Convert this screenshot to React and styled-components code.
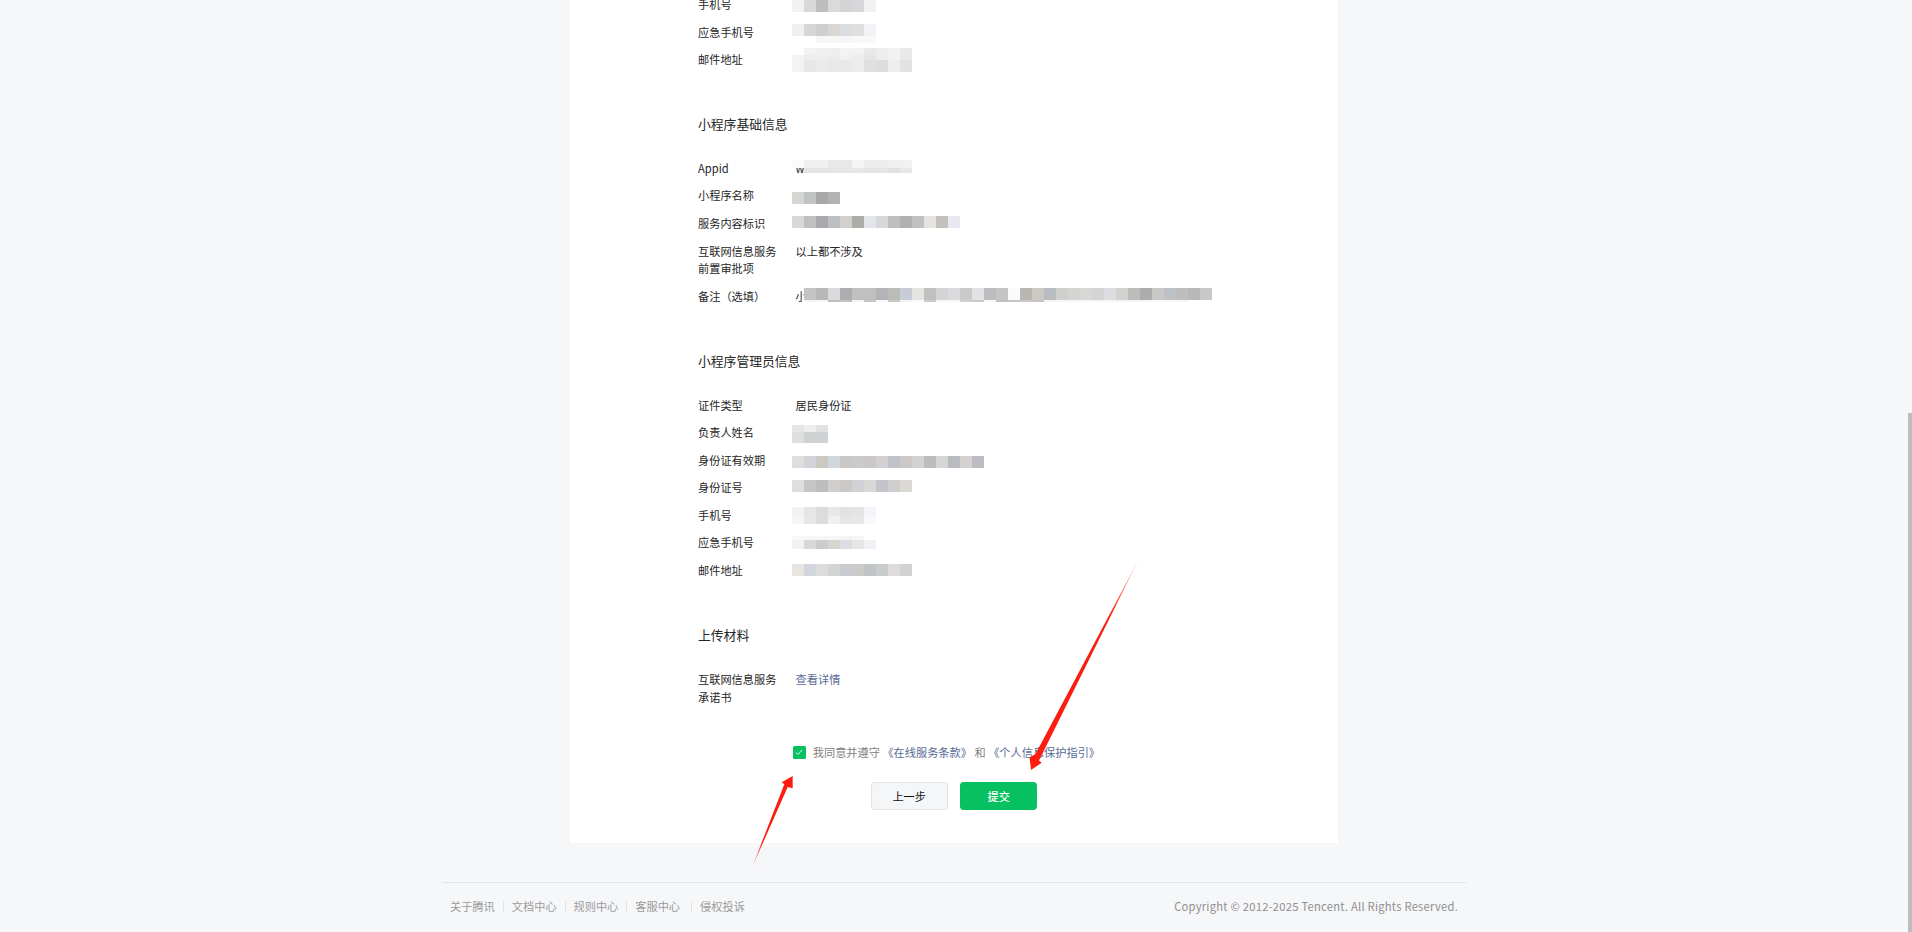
import React from "react";
import styled, { createGlobalStyle } from "styled-components";

const GlobalStyle = createGlobalStyle`
  html, body {
    margin: 0;
    padding: 0;
    height: 100%;
    overflow: hidden;
    background: #f6f7f9;
    font-family: "Noto Sans CJK SC", "Liberation Sans", sans-serif;
  }
`;

const Shell = styled.div`
  display: flex;
  height: 100vh;
  overflow: hidden;
  position: relative;
`;
const Main = styled.div`
  flex: 1;
  min-width: 0;
`;
const ScrollTrack = styled.div`
  width: 4px;
  display: flex;
  flex-direction: column;
`;
const ScrollThumb = styled.div`
  margin-top: 413px;
  flex: 1;
  background: #bdbdbd;
`;
const Card = styled.div`
  width: 768px;
  box-sizing: border-box;
  margin: -4px auto 0;
  padding: 0 128px 33px;
  background: #fff;
`;
const Section = styled.div`
  margin-top: 44px;
`;
const Title = styled.div`
  font-size: 12.8px;
  line-height: 22px;
  color: #262626;
  margin-bottom: 25px;
`;
const Row = styled.div`
  display: flex;
  font-size: 11.2px;
  line-height: 17.92px;
  margin-bottom: 9.6px;
  color: #262626;
`;
const Label = styled.div`
  width: 85px;
  margin-right: 12.6px;
  flex: none;
`;
const Value = styled.div`
  position: relative;
  flex: 1;
  min-height: 17.92px;
`;
const MosaicSvg = styled.svg`
  position: absolute;
  display: block;
  top: ${(p) => p.$top}px;
  left: -3.6px;
`;
const TextLink = styled.a`
  color: #576b95;
  text-decoration: none;
`;
const Agree = styled.div`
  display: flex;
  align-items: center;
  justify-content: center;
  margin-top: 37px;
  padding-right: 15px;
  font-size: 11.2px;
  line-height: 17.92px;
  color: #7f7f7f;
  white-space: pre;
  text-spacing-trim: space-all;
`;
const CheckBox = styled.span`
  width: 12.8px;
  height: 12.8px;
  border-radius: 1.6px;
  background: #07c160;
  margin-right: 7px;
  display: flex;
  align-items: center;
  justify-content: center;
`;
const Buttons = styled.div`
  display: flex;
  justify-content: center;
  gap: 12.8px;
  margin-top: 20px;
`;
const Button = styled.button`
  width: 76.8px;
  height: 28.8px;
  box-sizing: border-box;
  padding: 0;
  border-radius: 3.2px;
  font-family: inherit;
  font-size: 11.2px;
  font-weight: ${(p) => (p.$primary ? 500 : 400)};
  color: ${(p) => (p.$primary ? "#fff" : "#111")};
  background: ${(p) => (p.$primary ? "#07c160" : "#f5f6f8")};
  border: 1px solid ${(p) => (p.$primary ? "#07c160" : "#e2e4e7")};
`;
const Footer = styled.div`
  width: 1024px;
  box-sizing: border-box;
  margin: 39px auto 0;
  padding: 14px 8px 0;
  border-top: 1px solid #e4e5e7;
  display: flex;
  justify-content: space-between;
  align-items: center;
  font-size: 11.2px;
  line-height: 18px;
  color: #9a9a9a;
`;
const FooterLinks = styled.div`
  display: flex;
  align-items: center;
`;
const FooterLink = styled.span`
  padding-right: ${(p) => (p.$extra ? 3 : 0)}px;
`;
const FooterSep = styled.i`
  width: 1px;
  height: 11px;
  margin: 0 8px;
  background: #e2e3e5;
`;
const Copyright = styled.div`
  color: #8f8f8f;
  letter-spacing: 0.25px;
`;
const ArrowSvg = styled.svg`
  position: absolute;
  left: 0;
  top: 0;
  pointer-events: none;
`;

// each row of a mosaic: [height, first column, ...cell colours]
const Mosaic = ({ top, rows }) => {
  let width = 0;
  let height = 0;
  rows.forEach(([h, col, ...cells]) => {
    width = Math.max(width, (col + cells.length) * 12);
    height += h;
  });
  let y = 0;
  return (
    <MosaicSvg $top={top} width={width} height={height} shapeRendering="crispEdges">
      {rows.map(([h, col, ...cells], i) => {
        const rowY = y;
        y += h;
        return cells.map((c, j) => (
          <rect key={`${i}-${j}`} x={(col + j) * 12} y={rowY} width="12" height={h} fill={c} />
        ));
      })}
    </MosaicSvg>
  );
};

const m = {
  phone1: [[12, 0, "#f2f2f2", "#d8d8d8", "#bebebe", "#dadada", "#d6d4d2", "#d6d7da", "#f0f2f1"]],
  backup1: [
    [12, 0, "#f0f0f0", "#d6d6d6", "#cfcfcf", "#d9d6d4", "#dcdde2", "#dfdfdf", "#f2f3f6"],
    [7, 2, "#f6f6f6", "#f6f6f6", "#f6f6f6", "#f8f8f8", "#f8f8f8"],
  ],
  mail1: [
    [7, 1, "#f1f2f3", "#f0f0f0", "#efefef", "#f2f3f3", "#f2f2f2", "#e9e9e9", "#edeeed", "#f2f2f2", "#e9e9e9"],
    [5, 0, "#f2f2f2", "#ecedef", "#eeeeee", "#ececec", "#eff0f0", "#ededed", "#e5e5e5", "#ecedec", "#f2f2f2", "#e8e8e8"],
    [12, 0, "#f3f3f2", "#e6e8e8", "#eaecec", "#e8e8e7", "#e6e8ea", "#ececec", "#e0e0e0", "#dddddd", "#eeeeee", "#e2e2e2"],
  ],
  appid: [
    [8, 0, "#fbfbfb", "#efefef", "#f0f0f0", "#e8e8e8", "#e8e8e8", "#f5f5f5", "#ececef", "#ececec", "#f0f0f0", "#f0f1f0"],
    [5, 1, "#e4e4e4", "#e4e4e4", "#e6e6e6", "#e6e6e6", "#e8e8e8", "#e4e4e4", "#e6e6e2", "#e0e0e0", "#e8e8e8"],
  ],
  name: [[12, 0, "#d6d5d2", "#c1c4c4", "#a8a8a8", "#b2b2b2"]],
  service: [[12, 0, "#d8d8d8", "#c2c0be", "#aaa9ae", "#bdc0c2", "#d2d0cc", "#acaca8", "#e2e5ea", "#d8d8d8", "#c0bebe", "#b0b2b0", "#c0c0c0", "#e3e3e1", "#c4c0bc", "#e8e8f0"]],
  note: [
    [12, 1, "#c4c4c4", "#b8b8b8", "#d8dade", "#aeaeae", "#c0c0be", "#c2c0be", "#b4b4b8", "#bcbcb6", "#c8ccd4", "#e4e4e0", "#c0c0c2", "#d4d4d2", "#dadade", "#cacac8", "#e0e2e6", "#bebcbc", "#c4c4c2", "#fafbfb", "#bab6b2", "#ccc8c4", "#b8bcc0", "#d0cfcc", "#d4d4d2", "#d8d8d6", "#d4d4d6", "#dcdde0", "#d4d2ce", "#bcbcbc", "#acacac", "#c8c8c6", "#bcc2c6", "#bebebe", "#b8b8b8", "#c8c8c8"],
    [2, 1, "#f4f4f4", "#f6f6f6", "#bdbdbd", "#c2c2c2", "#f4f4f4", "#c6c6c6", "#f8f8f8", "#c8c8c8", "#f4f4f4", "#f8f8f8", "#cccccc", "#f8f8f8", "#f6f6f6", "#cfcfcf", "#c8c8c8", "#fafafa", "#c0c0c0", "#c4c4c4", "#c8c8c8", "#c6c6c6", "#f4f4f4", "#f6f6f6", "#f6f6f6", "#f6f6f6", "#f4f4f4", "#f6f6f6", "#f4f4f4", "#f4f4f4", "#f6f6f6", "#f8f8f8", "#f6f6f6", "#f6f6f6"],
  ],
  holder: [
    [7, 0, "#e6e6e6", "#eeeeee", "#e2e2e2"],
    [11, 0, "#e0dede", "#cfd2d2", "#cfd2d4"],
  ],
  expiry: [[12, 0, "#e0dedc", "#d2d4da", "#ccc8c2", "#d0d8de", "#cac8c6", "#c8cacc", "#cac8c6", "#d2d0d2", "#bfc2c8", "#ccc8c8", "#d2d2d4", "#bcbcbc", "#d8d6d4", "#b8bcc0", "#d4d2d0", "#bebcc2"]],
  idno: [[12, 0, "#dfdedc", "#c4c6c8", "#bebebe", "#cfcfcf", "#cbc8c6", "#d0d2d6", "#dad8d6", "#c4c4cc", "#cecece", "#dcd8d4"]],
  phone2: [
    [9, 0, "#f2f2f2", "#e4e6e8", "#dcdcdc", "#e8e8e8", "#e2e2e4", "#e4e4e4", "#f4f5f8"],
    [8, 0, "#f6f5f4", "#e6e8e8", "#dcdcdc", "#f2f0ee", "#e4e6e8", "#e8e8e8", "#f8f9fb"],
  ],
  backup2: [
    [4, 0, "#f8f8f8", "#f6f6f6", "#f6f6f6", "#f6f6f6", "#f4f4f4", "#f6f6f6"],
    [9, 0, "#f2f2f2", "#d8d8d6", "#cccccc", "#d8d4d0", "#dcdde2", "#e6e6e6", "#f0f1f4"],
  ],
  mail2: [[12, 0, "#e8e4e0", "#d2d6dc", "#dcdcdc", "#d4d4d2", "#c8ccd0", "#cacac6", "#c0c4c4", "#c8cccc", "#dedcda", "#d2d2d2"]],
};

const Arrows = () => (
  <ArrowSvg width="1912" height="932">
    <defs>
      <linearGradient id="fadeA" gradientUnits="userSpaceOnUse" x1="1140" y1="557" x2="1110" y2="615">
        <stop offset="0" stopColor="#fd1c10" stopOpacity="0.1" />
        <stop offset="1" stopColor="#fd1c10" />
      </linearGradient>
      <linearGradient id="fadeB" gradientUnits="userSpaceOnUse" x1="751" y1="870" x2="762" y2="843">
        <stop offset="0" stopColor="#fd1c10" stopOpacity="0.1" />
        <stop offset="1" stopColor="#fd1c10" />
      </linearGradient>
    </defs>
    <polygon fill="url(#fadeA)" points="1140,557 1039,760.5 1041.7,762.7 1031,770 1029.5,757.5 1035.5,754" />
    <polygon fill="url(#fadeB)" points="751,870 784.3,784.3 781.7,782.3 792.7,776 792.7,788.3 787.7,787" />
  </ArrowSvg>
);

export default function App() {
  return (
    <>
      <GlobalStyle />
      <Shell>
        <Main>
          <Card>
            <Row><Label>手机号</Label><Value><Mosaic top={4} rows={m.phone1} /></Value></Row>
            <Row><Label>应急手机号</Label><Value><Mosaic top={0} rows={m.backup1} /></Value></Row>
            <Row><Label>邮件地址</Label><Value><Mosaic top={-3} rows={m.mail1} /></Value></Row>

            <Section>
              <Title>小程序基础信息</Title>
              <Row><Label>Appid</Label><Value>w<Mosaic top={0} rows={m.appid} /></Value></Row>
              <Row><Label>小程序名称</Label><Value><Mosaic top={4.5} rows={m.name} /></Value></Row>
              <Row><Label>服务内容标识</Label><Value><Mosaic top={1} rows={m.service} /></Value></Row>
              <Row><Label>互联网信息服务前置审批项</Label><Value>以上都不涉及</Value></Row>
              <Row><Label>备注（选填）</Label><Value>小<Mosaic top={0} rows={m.note} /></Value></Row>
            </Section>

            <Section>
              <Title>小程序管理员信息</Title>
              <Row><Label>证件类型</Label><Value>居民身份证</Value></Row>
              <Row><Label>负责人姓名</Label><Value><Mosaic top={1} rows={m.holder} /></Value></Row>
              <Row><Label>身份证有效期</Label><Value><Mosaic top={4} rows={m.expiry} /></Value></Row>
              <Row><Label>身份证号</Label><Value><Mosaic top={0.5} rows={m.idno} /></Value></Row>
              <Row><Label>手机号</Label><Value><Mosaic top={0} rows={m.phone2} /></Value></Row>
              <Row><Label>应急手机号</Label><Value><Mosaic top={1.5} rows={m.backup2} /></Value></Row>
              <Row><Label>邮件地址</Label><Value><Mosaic top={2} rows={m.mail2} /></Value></Row>
            </Section>

            <Section>
              <Title>上传材料</Title>
              <Row><Label>互联网信息服务承诺书</Label><Value><TextLink>查看详情</TextLink></Value></Row>
            </Section>

            <Agree>
              <CheckBox>
                <svg width="8" height="7" viewBox="0 0 8 7">
                  <polyline points="1,3.5 3,5.5 7,1" fill="none" stroke="#fff" strokeWidth="1" opacity="0.85" />
                </svg>
              </CheckBox>
              我同意并遵守 <TextLink>《在线服务条款》</TextLink> 和 <TextLink>《个人信息保护指引》</TextLink>
            </Agree>
            <Buttons>
              <Button>上一步</Button>
              <Button $primary>提交</Button>
            </Buttons>
          </Card>

          <Footer>
            <FooterLinks>
              <FooterLink>关于腾讯</FooterLink>
              <FooterSep />
              <FooterLink>文档中心</FooterLink>
              <FooterSep />
              <FooterLink>规则中心</FooterLink>
              <FooterSep />
              <FooterLink $extra>客服中心</FooterLink>
              <FooterSep />
              <FooterLink>侵权投诉</FooterLink>
            </FooterLinks>
            <Copyright>Copyright © 2012-2025 Tencent. All Rights Reserved.</Copyright>
          </Footer>
        </Main>
        <ScrollTrack><ScrollThumb /></ScrollTrack>
        <Arrows />
      </Shell>
    </>
  );
}
